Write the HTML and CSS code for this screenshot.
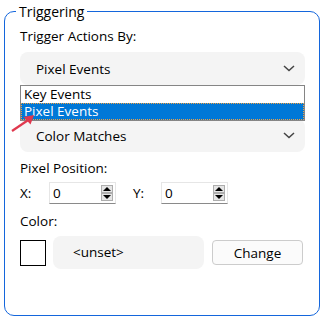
FILE: index.html
```html
<!DOCTYPE html>
<html>
<head>
<meta charset="utf-8">
<link rel="stylesheet" href="styles.css">
</head>
<body>
<fieldset class="group">
  <legend class="group-title">Triggering</legend>
  <div class="label label-first">Trigger Actions By:</div>
  <div class="combo combo-first">
    <span class="combo-text">Pixel Events</span>
    <svg class="chev" width="12" height="7" viewBox="0 0 12 7"><path d="M1 1 L6 5.5 L11 1" fill="none" stroke="#444" stroke-width="1.5"/></svg>
  </div>
  <div class="combo combo-second">
    <span class="combo-text">Color Matches</span>
    <svg class="chev" width="12" height="7" viewBox="0 0 12 7"><path d="M1 1 L6 5.5 L11 1" fill="none" stroke="#444" stroke-width="1.5"/></svg>
    <div class="popup">
      <div class="item">Key Events</div>
      <div class="item item-sel">Pixel Events</div>
    </div>
    <svg class="pointer" width="26" height="20" viewBox="0 0 26 20"><path d="M1 18 L18 6.5" stroke="#e0384e" stroke-width="2.2" fill="none"/><path d="M23 2 L12.5 4 L19.5 11.5 Z" fill="#e0384e"/></svg>
  </div>
  <div class="label label-pos">Pixel Position:</div>
  <div class="spin-row">
    <span class="axis">X:</span>
    <div class="spin">
      <span class="spin-val">0</span>
      <div class="spin-btns">
        <div class="spin-btn"><span class="tri tri-up"></span></div>
        <div class="spin-btn"><span class="tri tri-down"></span></div>
      </div>
    </div>
    <span class="axis axis-y">Y:</span>
    <div class="spin">
      <span class="spin-val">0</span>
      <div class="spin-btns">
        <div class="spin-btn"><span class="tri tri-up"></span></div>
        <div class="spin-btn"><span class="tri tri-down"></span></div>
      </div>
    </div>
  </div>
  <div class="label label-color">Color:</div>
  <div class="color-row">
    <div class="swatch"></div>
    <div class="unset">&lt;unset&gt;</div>
    <button class="change">Change</button>
  </div>
</fieldset>
</body>
</html>
```
FILE: styles.css
```css
html, body {
  margin: 0;
  padding: 0;
  background: #ffffff;
}
body {
  font-family: "Open Sans", "Noto Sans", sans-serif;
  font-size: 13.5px;
  color: #000000;
  width: 324px;
  height: 321px;
  overflow: hidden;
}
.group {
  box-sizing: border-box;
  margin: 2px 4px 0 4px;
  width: 316px;
  height: 314px;
  border: 1px solid #1466dc;
  border-radius: 10px;
  padding: 0 14px 0 15px;
  display: flex;
  flex-direction: column;
}
.group-title {
  padding: 0 3px;
  margin-left: -4px;
  line-height: 19px;
  height: 19px;
  font-size: 14px;
}
.label {
  line-height: 18px;
  height: 18px;
}
.label-first { margin-top: 6px; }
.combo {
  box-sizing: border-box;
  height: 33px;
  border-radius: 8px;
  background: #f4f4f4;
  display: flex;
  align-items: center;
  padding: 0 10px 0 16px;
  position: relative;
}
.combo-text { flex: 1; }
.combo-first { margin-top: 7px; }
.combo-second { margin-top: 34px; }
.chev { display: block; }
.popup {
  position: absolute;
  left: 0;
  right: 0;
  top: -34px;
  height: 36px;
  box-sizing: border-box;
  background: #ffffff;
  border: 1px solid #858585;
  display: flex;
  flex-direction: column;
  z-index: 2;
}
.item {
  height: 17px;
  line-height: 17px;
  padding-left: 3px;
  box-sizing: border-box;
}
.item-sel {
  background: #0078d7;
  color: #ffffff;
  border: 1px dotted #f0a040;
  line-height: 15px;
  padding-left: 2px;
}
.pointer {
  position: absolute;
  left: -9px;
  top: -6px;
  z-index: 3;
}
.label-pos { margin-top: 7px; }
.spin-row {
  display: flex;
  align-items: center;
  height: 22px;
  margin-top: 5px;
}
.axis {
  width: 29px;
}
.axis-y {
  margin-left: 17px;
  width: 28px;
}
.spin {
  box-sizing: border-box;
  width: 67px;
  height: 22px;
  background: #ffffff;
  border: 1px solid #e6e6e6;
  border-bottom: 1px solid #8a8a8a;
  display: flex;
  align-items: center;
  padding: 0 2px 0 3px;
}
.spin-val { flex: 1; }
.spin-btns {
  display: flex;
  flex-direction: column;
  gap: 0;
}
.spin-btn {
  box-sizing: border-box;
  width: 12px;
  height: 8px;
  background: #e5e5e5;
  border: 1px solid #adadad;
  display: flex;
  align-items: center;
  justify-content: center;
}
.tri {
  width: 0;
  height: 0;
  border-left: 4px solid transparent;
  border-right: 4px solid transparent;
}
.tri-up { border-bottom: 4px solid #000; }
.tri-down { border-top: 4px solid #000; }
.label-color { margin-top: 8px; }
.color-row {
  display: flex;
  align-items: center;
  height: 33px;
  margin-top: 6px;
}
.swatch {
  box-sizing: border-box;
  width: 26px;
  height: 26px;
  border: 1px solid #000;
  background: #fff;
}
.unset {
  box-sizing: border-box;
  margin-left: 7px;
  width: 151px;
  height: 33px;
  border-radius: 8px;
  background: #f4f4f4;
  line-height: 33px;
  padding-left: 20px;
}
.change {
  box-sizing: border-box;
  margin-left: 8px;
  width: 91px;
  height: 25px;
  border: 1px solid #cccccc;
  border-radius: 4px;
  background: #fbfbfb;
  font-family: inherit;
  font-size: inherit;
  color: #000000;
  padding: 0;
}
```
